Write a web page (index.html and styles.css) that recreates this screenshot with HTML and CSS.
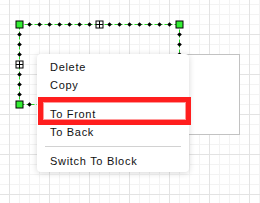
FILE: index.html
```html
<!DOCTYPE html>
<html>
<head>
<meta charset="utf-8">
<link rel="stylesheet" href="styles.css">
</head>
<body>
<div class="canvas">
  <svg class="selection" width="260" height="203" viewBox="0 0 260 203">
    <defs>
      <path id="dot" d="M-2.3 0L0 -2.3L2.3 0L0 2.3Z" fill="#000"/>
      <g id="plus">
        <rect x="-3.5" y="-3.5" width="7" height="7" fill="#fff" stroke="#000" stroke-width="1"/>
        <path d="M-3.5 0H3.5M0 -3.5V3.5" stroke="#000" stroke-width="1"/>
      </g>
      <rect id="corner" x="-3.5" y="-3.5" width="7" height="7" fill="#33ee33" stroke="#000" stroke-width="1"/>
    </defs>
    <rect x="19.5" y="24.5" width="160" height="80" fill="none" stroke="#22dd22" stroke-width="1" stroke-dasharray="3 2"/>
    <g>
      <use href="#dot" x="29.5" y="24.5"/><use href="#dot" x="39.5" y="24.5"/><use href="#dot" x="49.5" y="24.5"/>
      <use href="#dot" x="59.5" y="24.5"/><use href="#dot" x="69.5" y="24.5"/><use href="#dot" x="79.5" y="24.5"/>
      <use href="#dot" x="89.5" y="24.5"/><use href="#dot" x="109.5" y="24.5"/><use href="#dot" x="119.5" y="24.5"/>
      <use href="#dot" x="129.5" y="24.5"/><use href="#dot" x="139.5" y="24.5"/><use href="#dot" x="149.5" y="24.5"/>
      <use href="#dot" x="159.5" y="24.5"/><use href="#dot" x="169.5" y="24.5"/>
      <use href="#dot" x="29.5" y="104.5"/><use href="#dot" x="39.5" y="104.5"/><use href="#dot" x="49.5" y="104.5"/>
      <use href="#dot" x="19.5" y="34.5"/><use href="#dot" x="19.5" y="44.5"/><use href="#dot" x="19.5" y="54.5"/>
      <use href="#dot" x="19.5" y="74.5"/><use href="#dot" x="19.5" y="84.5"/><use href="#dot" x="19.5" y="94.5"/>
      <use href="#dot" x="179.5" y="34.5"/><use href="#dot" x="179.5" y="44.5"/><use href="#dot" x="179.5" y="54.5"/>
      <use href="#plus" x="99.5" y="24.5"/><use href="#plus" x="19.5" y="64.5"/>
      <use href="#corner" x="19.5" y="24.5"/><use href="#corner" x="179.5" y="24.5"/><use href="#corner" x="19.5" y="104.5"/>
    </g>
  </svg>
  <div class="shape"></div>
  <div class="menu">
    <div class="item">Delete</div>
    <div class="item">Copy</div>
    <div class="sep"></div>
    <div class="item">To Front</div>
    <div class="item">To Back</div>
    <div class="sep"></div>
    <div class="item">Switch To Block</div>
  </div>
  <div class="highlight"></div>
</div>
</body>
</html>
```
FILE: styles.css
```css
html, body {
  margin: 0;
  padding: 0;
  background: #fff;
}
body {
  width: 260px;
  height: 203px;
  overflow: hidden;
  font-family: "Liberation Sans", Arial, sans-serif;
}
.canvas {
  position: relative;
  width: 260px;
  height: 203px;
  background-color: #fff;
  background-image:
    linear-gradient(to right, #e3e3e3 1px, transparent 1px),
    linear-gradient(to bottom, #e3e3e3 1px, transparent 1px),
    linear-gradient(to right, #f3f3f3 1px, transparent 1px),
    linear-gradient(to bottom, #f3f3f3 1px, transparent 1px);
  background-size: 40px 40px, 40px 40px, 10px 10px, 10px 10px;
  background-position: 9px 34px, 9px 34px, 9px 4px, 9px 4px;
}
.selection {
  position: absolute;
  left: 0;
  top: 0;
}
.shape {
  position: absolute;
  left: 79px;
  top: 54px;
  width: 161px;
  height: 81px;
  box-sizing: border-box;
  border: 1px solid #c2c2c2;
  background: #fff;
}
.menu {
  position: absolute;
  left: 37px;
  top: 54px;
  width: 152px;
  height: 118px;
  box-sizing: border-box;
  padding: 4px 0 2px;
  background: #fff;
  border-radius: 4px;
  box-shadow: 0 1px 6px rgba(0, 0, 0, 0.16);
}
.item {
  height: 18px;
  line-height: 18px;
  padding-left: 13px;
  font-size: 11px;
  letter-spacing: 0.7px;
  color: #111;
  white-space: nowrap;
}
.sep {
  height: 1px;
  margin: 5px 8px;
  background: #d2d2d2;
}
.highlight {
  position: absolute;
  left: 38px;
  top: 97px;
  width: 153px;
  height: 28px;
  box-sizing: border-box;
  border: 5px solid #ff1e1e;
  box-shadow: inset 0 0 0 1px #ff9a9a;
}
```
